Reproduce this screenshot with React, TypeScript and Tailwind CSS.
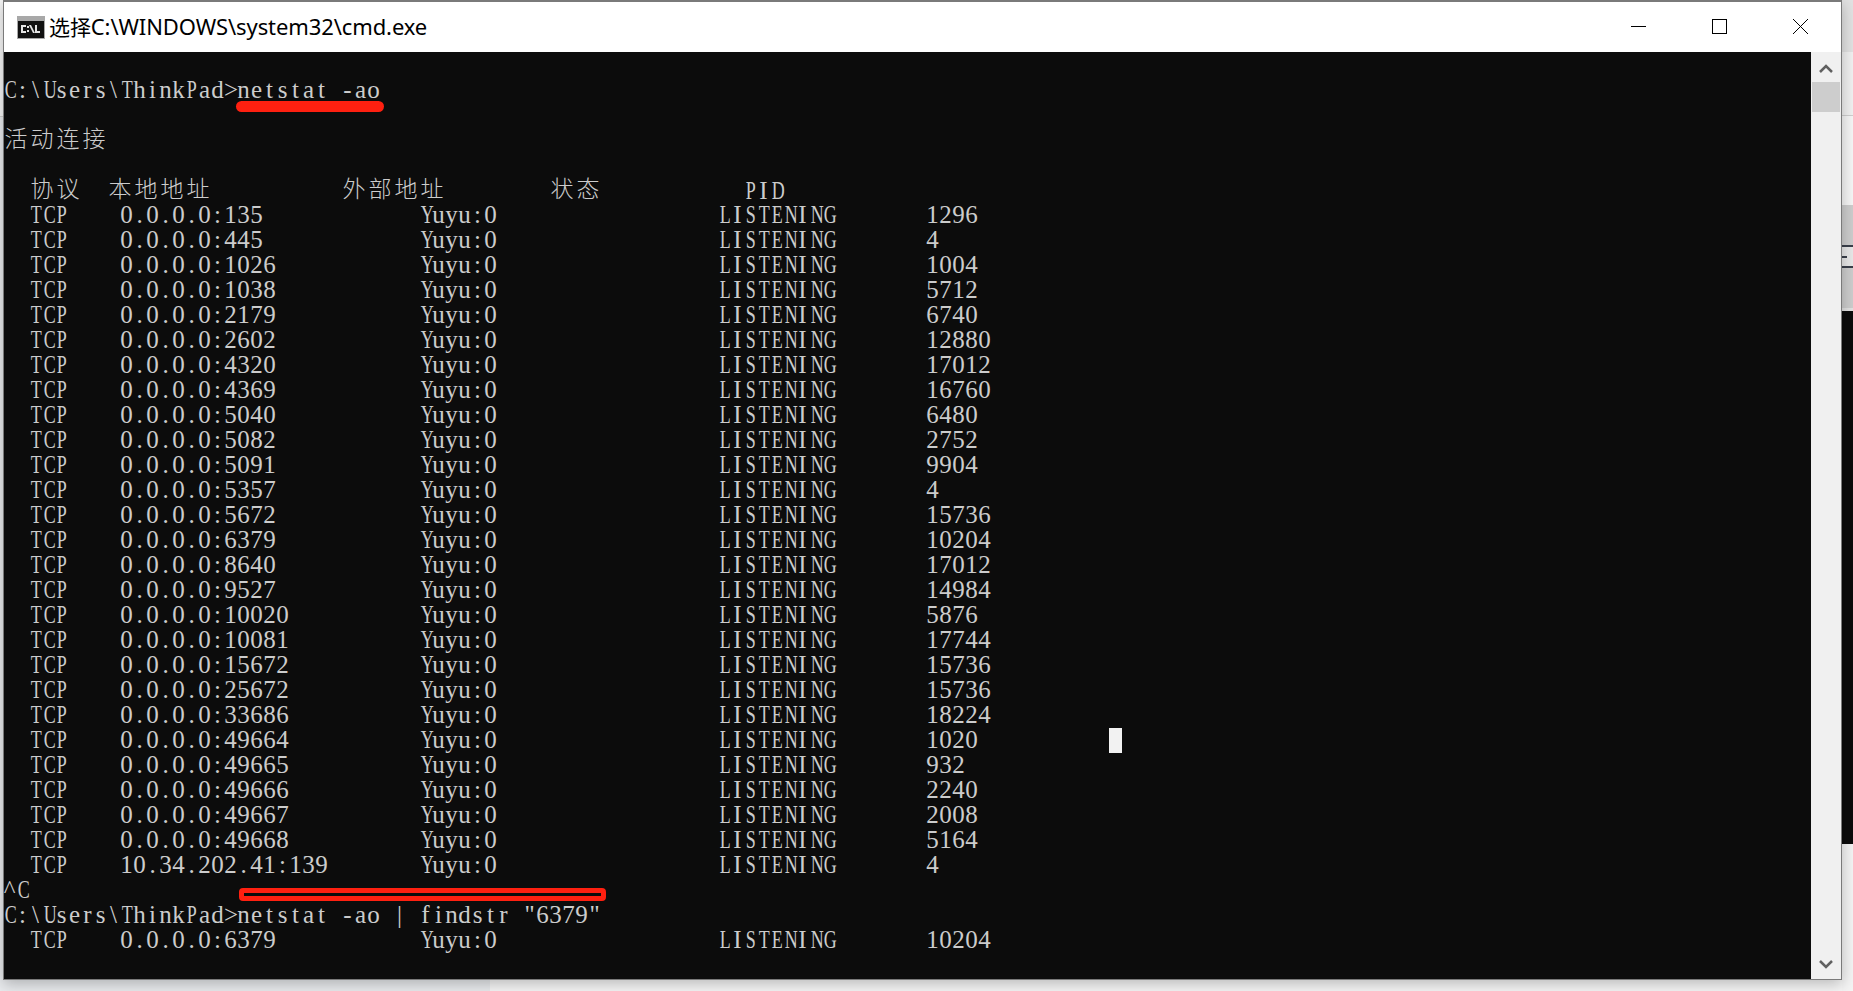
import React from 'react';

const rows: [string, string, string][] = [
  ['0.0.0.0:135', 'LISTENING', '1296'],
  ['0.0.0.0:445', 'LISTENING', '4'],
  ['0.0.0.0:1026', 'LISTENING', '1004'],
  ['0.0.0.0:1038', 'LISTENING', '5712'],
  ['0.0.0.0:2179', 'LISTENING', '6740'],
  ['0.0.0.0:2602', 'LISTENING', '12880'],
  ['0.0.0.0:4320', 'LISTENING', '17012'],
  ['0.0.0.0:4369', 'LISTENING', '16760'],
  ['0.0.0.0:5040', 'LISTENING', '6480'],
  ['0.0.0.0:5082', 'LISTENING', '2752'],
  ['0.0.0.0:5091', 'LISTENING', '9904'],
  ['0.0.0.0:5357', 'LISTENING', '4'],
  ['0.0.0.0:5672', 'LISTENING', '15736'],
  ['0.0.0.0:6379', 'LISTENING', '10204'],
  ['0.0.0.0:8640', 'LISTENING', '17012'],
  ['0.0.0.0:9527', 'LISTENING', '14984'],
  ['0.0.0.0:10020', 'LISTENING', '5876'],
  ['0.0.0.0:10081', 'LISTENING', '17744'],
  ['0.0.0.0:15672', 'LISTENING', '15736'],
  ['0.0.0.0:25672', 'LISTENING', '15736'],
  ['0.0.0.0:33686', 'LISTENING', '18224'],
  ['0.0.0.0:49664', 'LISTENING', '1020'],
  ['0.0.0.0:49665', 'LISTENING', '932'],
  ['0.0.0.0:49666', 'LISTENING', '2240'],
  ['0.0.0.0:49667', 'LISTENING', '2008'],
  ['0.0.0.0:49668', 'LISTENING', '5164'],
  ['10.34.202.41:139', 'LISTENING', '4'],
];

const fmt = (r: [string, string, string]) =>
  '  TCP    ' + r[0].padEnd(23) + 'Yuyu:0'.padEnd(23) + r[1].padEnd(16) + r[2];

// console text sits on a fixed grid: 13px per latin char, 26px per CJK char
const cellClass = (ch: string) => {
  if (/[\u4e00-\u9fff]/.test(ch)) return "inline-block w-[26px] text-center text-[23px] font-light -translate-y-[2px] font-['Noto_Sans_CJK_SC',sans-serif]";
  if (/[A-HJ-Z]/.test(ch)) return 'inline-block w-[13px] text-center scale-x-[0.72]';
  return 'inline-block w-[13px] text-center';
};

const Line = ({ text = '' }: { text?: string }) => (
  <div className="h-[25px] leading-[25px] whitespace-pre -ml-px">
    {Array.from(text).map((ch, i) => (
      <span key={i} className={cellClass(ch)}>{ch}</span>
    ))}
  </div>
);

// the window behind the console, only slivers of it show
const BackWindow = () => (
  <>
    <div className="absolute left-0 top-[116px] bottom-0 w-[490px] bg-[#e9ebee] border-t border-[#d0d0d0]" />
    <div className="absolute right-0 top-0 bottom-0 w-[11px] flex flex-col bg-[#f4f4f4]">
      <div className="h-[52px] bg-[#e2e2e2]" />
      <div className="h-[64px] bg-[#f1f1f1] border-b border-[#cfcfcf]" />
      <div className="h-[89px] bg-[#f6f6f6]" />
      <div className="h-[40px] bg-[#cdcdcd]" />
      <div className="h-[2px] bg-[#3a3f4a]" />
      <div className="h-[19px] bg-[#e8e8e8] flex items-center"><div className="w-[5px] h-[2px] bg-[#3a3f4a]" /></div>
      <div className="h-[2px] bg-[#3a3f4a]" />
      <div className="h-[40px] bg-[#cdcdcd]" />
      <div className="h-[3px] bg-[#e2e2e2]" />
      <div className="h-[533px] bg-[#0c0c0c]" />
    </div>
  </>
);

export default function App() {
  return (
    <div className="w-[1853px] h-[991px] bg-[#f6f6f6] overflow-hidden relative">
      <BackWindow />
      <div className="absolute left-[3px] top-0 w-[1839px] h-[980px] border-t-2 border-x border-b border-[#7a7a7a] bg-white flex flex-col shadow-[0_4px_14px_rgba(0,0,0,0.25)]">
        {/* title bar */}
        <div className="h-[50px] shrink-0 flex items-center pl-[13px] bg-white">
          <svg width="28" height="23" viewBox="0 0 28 23" className="shrink-0">
            <rect width="28" height="23" fill="#a8a8a8" />
            <rect x="1" y="5" width="26" height="17" fill="#111" />
            <path d="M4 9h5v2H6v4h3v2H4zM10 10h2v2h-2zM10 14h2v2h-2zM14 9l4 8h-2l-4-8zM18 9h2v6h3v2h-5z" fill="#e4e4e4" />
          </svg>
          <span className="ml-[4px] text-[22px] tracking-[-0.1px] text-black font-['Noto_Sans','Noto_Sans_CJK_SC',sans-serif]"><span className="text-[21px]">选择</span>C:\WINDOWS\system32\cmd.exe</span>
        </div>
        {/* console */}
        <div className="flex flex-1 min-h-0">
          <div className="flex-1 bg-[#0c0c0c] relative text-[#cccccc] text-[25px] font-['Liberation_Serif',serif] pt-[25px]">
            <Line text="C:\Users\ThinkPad>netstat -ao" />
            <Line />
            <Line text="活动连接" />
            <Line />
            <Line text="  协议  本地地址          外部地址        状态           PID" />
            {rows.map((r) => (
              <Line key={r[0]} text={fmt(r)} />
            ))}
            <Line text="^C" />
            <Line text={'C:\\Users\\ThinkPad>netstat -ao | findstr "6379"'} />
            <Line text={fmt(['0.0.0.0:6379', 'LISTENING', '10204'])} />
            {/* red marks */}
            <div className="absolute left-[232px] top-[49px] w-[148px] h-[11px] rounded-full bg-[#ff2010]" />
            <div className="absolute left-[235px] top-[836px] w-[367px] h-[13px] rounded-[4px] border-[5px] border-[#ff2010]" />
            {/* cursor */}
            <div className="absolute left-[1105px] top-[676px] w-[13px] h-[25px] bg-[#f2f2f2]" />
          </div>
          {/* scrollbar */}
          <div className="w-[30px] bg-[#f0f0f0] flex flex-col items-center shrink-0">
            <svg width="14" height="10" viewBox="0 0 14 10" className="mt-[12px]"><path d="M1 8l6-6 6 6" fill="none" stroke="#606060" strokeWidth="2.5" /></svg>
            <div className="w-[28px] h-[30px] mt-[8px] bg-[#cdcdcd]" />
            <div className="flex-1" />
            <svg width="14" height="10" viewBox="0 0 14 10" className="mb-[10px]"><path d="M1 2l6 6 6-6" fill="none" stroke="#606060" strokeWidth="2.5" /></svg>
          </div>
        </div>
        {/* window controls */}
        <div className="absolute right-[33px] top-[17px] flex gap-[66px] items-center">
          <svg width="15" height="15" viewBox="0 0 15 15"><path d="M0 7.5h15" stroke="#000" /></svg>
          <svg width="15" height="15" viewBox="0 0 15 15"><rect x="0.5" y="0.5" width="14" height="14" fill="none" stroke="#000" /></svg>
          <svg width="15" height="15" viewBox="0 0 15 15"><path d="M0 0l15 15M15 0L0 15" stroke="#000" /></svg>
        </div>
      </div>
    </div>
  );
}
